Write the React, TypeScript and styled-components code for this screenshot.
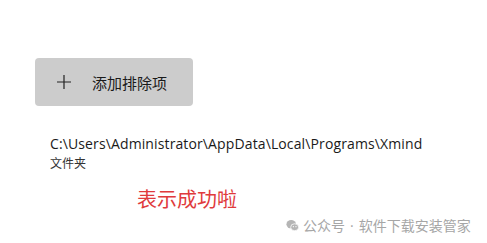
import React from "react";
import styled, { createGlobalStyle } from "styled-components";

const Global = createGlobalStyle`
  html, body { margin: 0; padding: 0; background: #ffffff; }
  body { width: 487px; height: 243px; overflow: hidden; font-family: "Open Sans", "Noto Sans CJK SC", sans-serif; }
`;

const Page = styled.div`
  position: relative;
  width: 487px;
  height: 243px;
  box-sizing: border-box;
  padding: 58px 0 0 35px;
  display: flex;
  flex-direction: column;
`;

const AddButton = styled.button`
  width: 158px;
  height: 48px;
  box-sizing: border-box;
  border: none;
  border-radius: 4px;
  background: #cccccc;
  display: flex;
  align-items: center;
  padding: 0 0 0 22px;
  gap: 21px;
  font-family: "Noto Sans CJK SC", sans-serif;
  font-size: 15px;
  color: #1a1a1a;
  cursor: pointer;
`;

const PathBlock = styled.div`
  margin: 28px 0 0 15px;
  display: flex;
  flex-direction: column;
`;

const PathText = styled.div`
  font-family: "Open Sans", "Noto Sans CJK SC", sans-serif;
  font-size: 14px;
  letter-spacing: 0.12px;
  line-height: 20px;
  color: #1a1a1a;
`;

const TypeText = styled.div`
  font-family: "Noto Sans CJK SC", sans-serif;
  font-size: 12px;
  line-height: 17px;
  color: #333333;
`;

const Success = styled.div`
  margin: 16px 0 0 102px;
  font-family: "Noto Sans CJK SC", sans-serif;
  font-size: 20px;
  line-height: 24px;
  color: #e03a3c;
`;

const Watermark = styled.div`
  position: absolute;
  left: 286px;
  top: 215px;
  display: flex;
  align-items: center;
  gap: 4px;
  font-family: "Noto Sans CJK SC", sans-serif;
  font-size: 14px;
  line-height: 20px;
  color: #a6a6a6;
`;

const Dot = styled.span`
  font-family: "Open Sans", sans-serif;
  margin: 0 5px;
`;

const Plus = () => (
  <svg width="14" height="14" viewBox="0 0 14 14">
    <path d="M7 0v14M0 7h14" stroke="#222" strokeWidth="1.2" />
  </svg>
);

const WeChat = () => (
  <svg width="13" height="13" viewBox="0 0 15 14">
    <ellipse cx="6" cy="5.5" rx="5.5" ry="4.8" fill="#b5b5b5" />
    <ellipse cx="10" cy="9" rx="4.6" ry="4" fill="#b5b5b5" stroke="#fff" strokeWidth="0.9" />
    <circle cx="8.5" cy="8.3" r="0.7" fill="#fff" />
    <circle cx="11.5" cy="8.3" r="0.7" fill="#fff" />
  </svg>
);

export default function App() {
  return (
    <>
      <Global />
      <Page>
        <AddButton>
          <Plus />
          <span>添加排除项</span>
        </AddButton>
        <PathBlock>
          <PathText>C:\Users\Administrator\AppData\Local\Programs\Xmind</PathText>
          <TypeText>文件夹</TypeText>
        </PathBlock>
        <Success>表示成功啦</Success>
        <Watermark>
          <WeChat />
          <span>
            公众号<Dot>·</Dot>软件下载安装管家
          </span>
        </Watermark>
      </Page>
    </>
  );
}
